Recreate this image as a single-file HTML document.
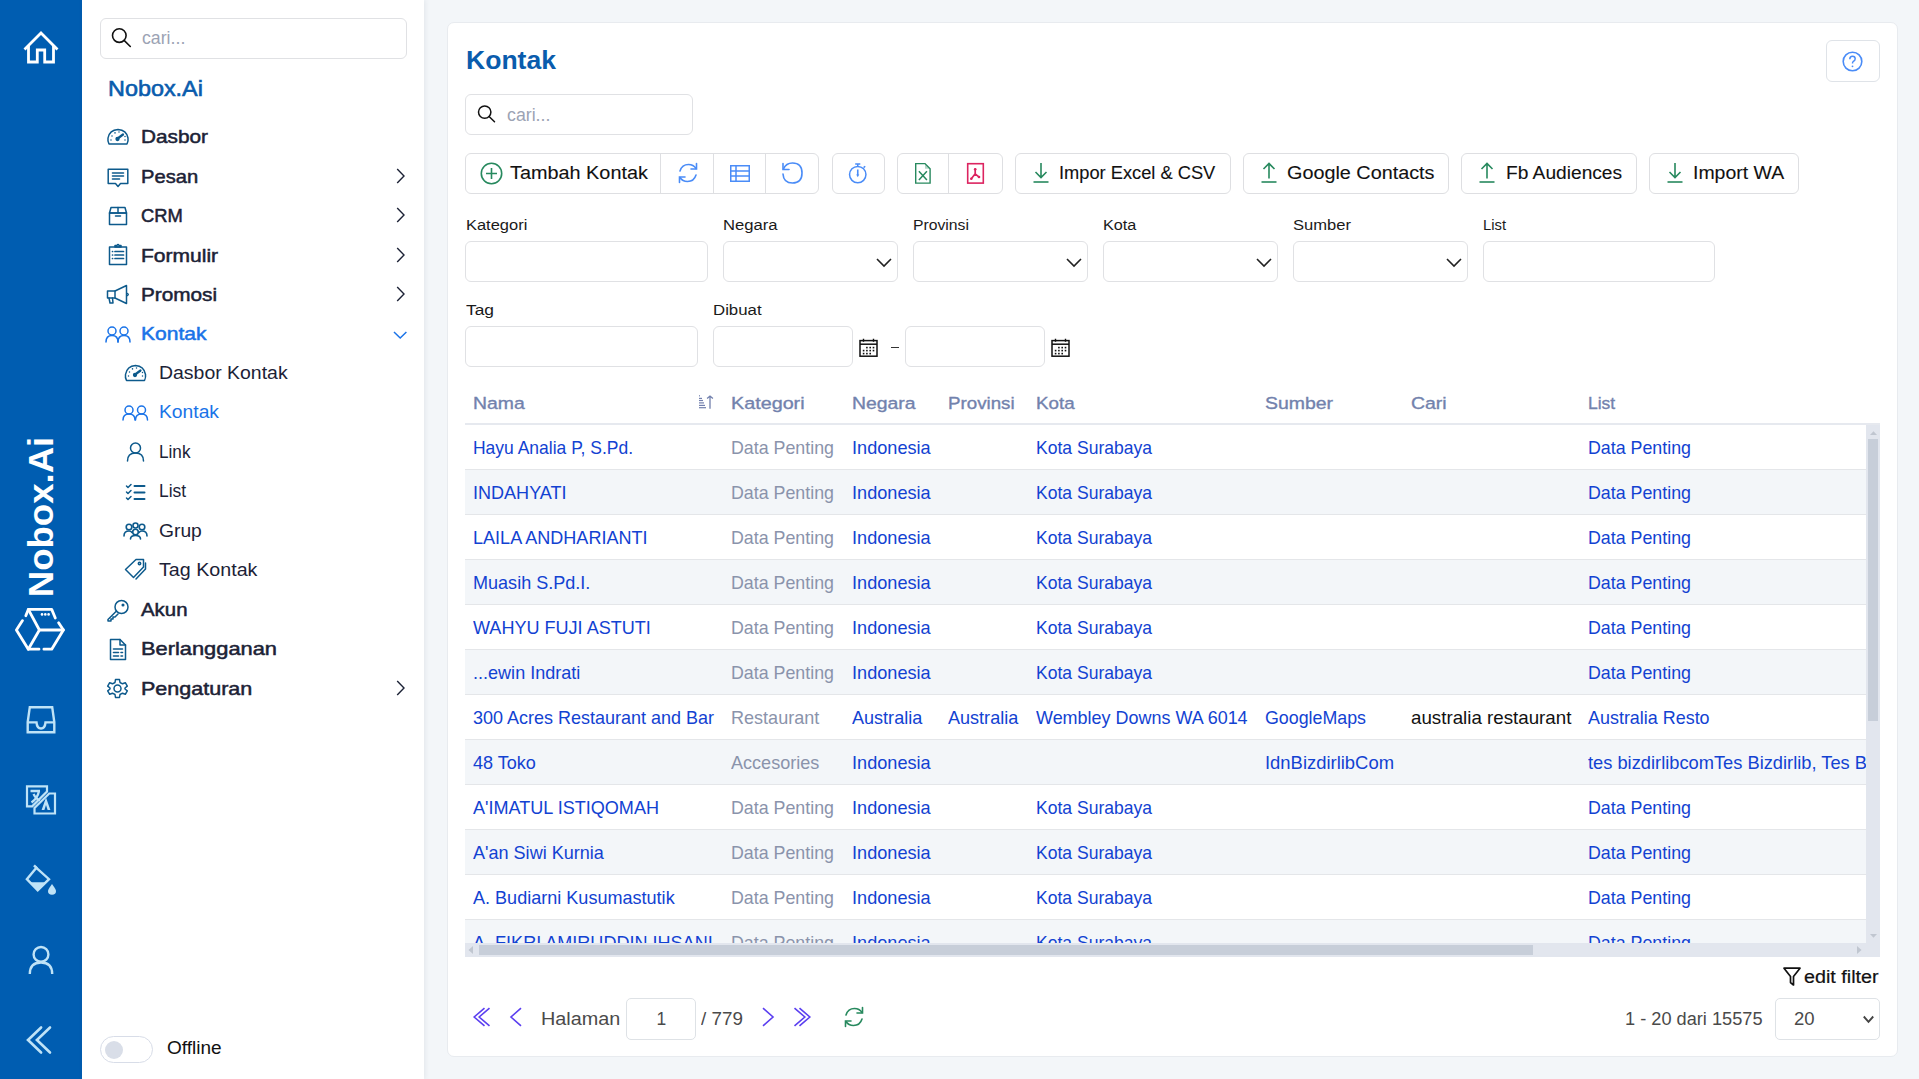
<!DOCTYPE html><html><head><meta charset="utf-8"><style>
*{box-sizing:border-box;margin:0;padding:0}
html,body{width:1919px;height:1079px;overflow:hidden;background:#F3F6F9;font-family:"Liberation Sans",sans-serif;color:#1f2937}
div,span,svg{position:absolute;display:block}
#rail{left:0;top:0;width:82px;height:1079px;background:#005DB1}
#side{left:82px;top:0;width:342px;height:1079px;background:#fff;box-shadow:1px 0 5px rgba(30,40,60,0.08)}
.sbox{border:1px solid #e0e1e4;border-radius:6px;background:#fff}
.ph{color:#9ca3b4;font-size:18px;white-space:nowrap;line-height:20px}
.mi{left:141px;font-size:19.5px;font-weight:bold;color:#1c2236;white-space:nowrap;line-height:20px}
.si{left:159px;font-size:19.5px;color:#1c2236;white-space:nowrap;line-height:20px}
#card{left:447px;top:22px;width:1451px;height:1035px;background:#fff;border:1px solid #e8ebef;border-radius:7px}
.btn{top:153px;height:41px;border:1px solid #dedfe2;border-radius:6px;background:#fff}
.vd{top:153px;width:1px;height:41px;background:#dedfe2}
.bt{top:163px;font-size:19px;color:#111;white-space:nowrap;line-height:20px}
.lbl{font-size:16px;color:#212529;white-space:nowrap;line-height:16px}
.inp{height:41px;border:1px solid #e0e1e4;border-radius:6px;background:#fff}
.th{top:393px;font-size:17.5px;color:#7b86a6;white-space:nowrap;line-height:18px}
.row{left:0;width:1401px;height:45px;border-bottom:1px solid #e4e6e9;overflow:hidden}
.alt{background:#F3F6F9}
.c{top:12px;font-size:17.5px;color:#1d45d0;white-space:nowrap;line-height:20px}
.g{color:#8a93a6}
.k{color:#111}
svg{overflow:visible}
</style></head><body>
<div id="rail"></div>
<svg style="left:0;top:0;width:82px;height:1079px" width="82" height="1079" viewBox="0 0 82 1079">
<path d="M25.5 48.5 L41 33 L56.5 48.5" fill="none" stroke="#ffffff" stroke-width="2.8" stroke-linecap="square"/>
<path d="M28.5 46 V62 H37.3 V50 H44.7 V62 H53.5 V46" fill="none" stroke="#ffffff" stroke-width="2.8"/>
<g fill="none" stroke="#ffffff" stroke-width="2.8" stroke-linecap="round" stroke-linejoin="round">
<path d="M25.8 615.8 L28.3 609.4 L51.7 609.4 L55.3 618"/>
<path d="M58.6 622.8 L63.4 630 L51.7 649.2 L43.9 649.2"/>
<path d="M39 649.2 L28.3 649.2 L16.4 630 L22.5 620.6"/>
<path d="M28.3 609.4 L39.4 630 L28.3 649.2"/>
<path d="M39.4 630 L63.4 630"/>
</g>
<g fill="#ffffff"><circle cx="42" cy="614.4" r="1.3"/><circle cx="45.3" cy="614.4" r="1.3"/><circle cx="48.6" cy="614.4" r="1.3"/></g>
<g fill="none" stroke="#bfe3f7" stroke-width="2.4" stroke-linejoin="miter">
<path d="M29.8 707.2 H52.2 L54.3 722 V732.3 H27.7 V722 Z"/>
<path d="M27.7 722.4 H36.5 Q37 728.5 41 728.5 Q45 728.5 45.5 722.4 H54.3"/>
</g>
<g fill="none" stroke="#bfe3f7" stroke-width="2.2" stroke-linejoin="miter">
<path d="M27 786.3 H47 V791.5 L32.2 806.4 H27 Z"/>
<path d="M34.5 813.5 V808 L49.2 793.5 H55 V813.5 Z"/>
</g>
<g fill="none" stroke="#bfe3f7" stroke-width="2.3" stroke-linecap="butt">
<path d="M30.5 791 H40 M39 791 Q37.5 798.5 31.5 802.5 M33.5 794 Q36 799 40 800.5"/>
</g>
<path d="M41.6 810 L46 797.6 L50.4 810 H47.6 L46 805 L44.4 810 Z" fill="#bfe3f7"/>
<g fill="none" stroke="#bfe3f7" stroke-width="2.4" stroke-linejoin="miter">
<path d="M34 865.3 L37 868.3"/>
<path d="M36.4 867.8 L49 879.2 L37.7 890.3 L26.9 879.2 Z"/>
</g>
<path d="M29.5 882.3 L46.5 882.3 L37.7 891 Z" fill="#bfe3f7"/>
<path d="M52 884 Q48 889.5 48 891 Q48 894.8 52 894.8 Q56 894.8 56 891 Q56 889.5 52 884 Z" fill="#bfe3f7"/>
<g fill="none" stroke="#bfe3f7" stroke-width="2.4">
<circle cx="41" cy="954.4" r="7.4"/>
<path d="M29.8 974 Q29.8 962.5 41 962.5 Q52.2 962.5 52.2 974"/>
</g>
<g fill="none" stroke="#bfe3f7" stroke-width="2.6" stroke-linecap="round" stroke-linejoin="miter">
<path d="M41.1 1027.5 L28 1040 L41.1 1052.5"/>
<path d="M50 1027.5 L36.9 1040 L50 1052.5"/>
</g>
</svg>
<div style="left:-37px;top:498px;width:156px;height:38px;transform:rotate(-90deg) scaleX(1.045);color:#fff;font-weight:bold;font-size:35px;line-height:38px;white-space:nowrap;text-align:center">Nobox.Ai</div>
<div id="side"></div>
<div class="sbox" style="left:100px;top:18px;width:307px;height:41px"></div>
<svg style="left:100px;top:18px;width:40px;height:40px" viewBox="0 0 40 40" width="40" height="40" ><g fill="none" stroke="#111" stroke-width="1.6"><circle cx="19.3" cy="17.6" r="6.8"/><path d="M24.1 22.4 L30.3 28.5" stroke-linecap="round"/></g></svg>
<div style="left:141.50px;top:28px;font-size:17.5px;line-height:20px;color:#9ca3b4;white-space:nowrap;transform:scaleX(1.0120);transform-origin:0 0;">cari...</div>
<div style="left:108.00px;top:76px;font-size:21.7px;line-height:25px;color:#0a5cad;white-space:nowrap;transform:scaleX(1.0778);transform-origin:0 0;-webkit-text-stroke:0.6px #0a5cad;">Nobox.Ai</div>
<div style="left:141.00px;top:126px;font-size:18.5px;line-height:21px;color:#1c2236;white-space:nowrap;transform:scaleX(1.1234);transform-origin:0 0;-webkit-text-stroke:0.5px #1c2236;">Dasbor</div>
<div style="left:141.00px;top:166px;font-size:18.5px;line-height:21px;color:#1c2236;white-space:nowrap;transform:scaleX(1.0885);transform-origin:0 0;-webkit-text-stroke:0.5px #1c2236;">Pesan</div>
<svg style="left:396px;top:168px;width:10px;height:16px" viewBox="0 0 10 16" width="10" height="16" ><path d="M1.2 1 L8 8 L1.2 15" fill="none" stroke="#1c2236" stroke-width="1.4"/></svg>
<div style="left:141.00px;top:205px;font-size:18.5px;line-height:21px;color:#1c2236;white-space:nowrap;transform:scaleX(0.9921);transform-origin:0 0;-webkit-text-stroke:0.5px #1c2236;">CRM</div>
<svg style="left:396px;top:207px;width:10px;height:16px" viewBox="0 0 10 16" width="10" height="16" ><path d="M1.2 1 L8 8 L1.2 15" fill="none" stroke="#1c2236" stroke-width="1.4"/></svg>
<div style="left:141.00px;top:245px;font-size:18.5px;line-height:21px;color:#1c2236;white-space:nowrap;transform:scaleX(1.1366);transform-origin:0 0;-webkit-text-stroke:0.5px #1c2236;">Formulir</div>
<svg style="left:396px;top:247px;width:10px;height:16px" viewBox="0 0 10 16" width="10" height="16" ><path d="M1.2 1 L8 8 L1.2 15" fill="none" stroke="#1c2236" stroke-width="1.4"/></svg>
<div style="left:141.00px;top:284px;font-size:18.5px;line-height:21px;color:#1c2236;white-space:nowrap;transform:scaleX(1.1216);transform-origin:0 0;-webkit-text-stroke:0.5px #1c2236;">Promosi</div>
<svg style="left:396px;top:286px;width:10px;height:16px" viewBox="0 0 10 16" width="10" height="16" ><path d="M1.2 1 L8 8 L1.2 15" fill="none" stroke="#1c2236" stroke-width="1.4"/></svg>
<div style="left:141.00px;top:323px;font-size:18.5px;line-height:21px;color:#1a73e8;white-space:nowrap;transform:scaleX(1.1372);transform-origin:0 0;-webkit-text-stroke:0.5px #1a73e8;">Kontak</div>
<svg style="left:393px;top:331px;width:15px;height:10px" viewBox="0 0 15 10" width="15" height="10" ><path d="M1 1 L7.2 7 L13.4 1" fill="none" stroke="#1a73e8" stroke-width="1.5"/></svg>
<div style="left:159.00px;top:363px;font-size:17.5px;line-height:20px;color:#1c2236;white-space:nowrap;transform:scaleX(1.1109);transform-origin:0 0;">Dasbor Kontak</div>
<div style="left:159.00px;top:402px;font-size:17.5px;line-height:20px;color:#1a73e8;white-space:nowrap;transform:scaleX(1.1012);transform-origin:0 0;">Kontak</div>
<div style="left:159.00px;top:442px;font-size:17.5px;line-height:20px;color:#1c2236;white-space:nowrap;transform:scaleX(0.9812);transform-origin:0 0;">Link</div>
<div style="left:159.00px;top:481px;font-size:17.5px;line-height:20px;color:#1c2236;white-space:nowrap;transform:scaleX(0.9951);transform-origin:0 0;">List</div>
<div style="left:159.00px;top:521px;font-size:17.5px;line-height:20px;color:#1c2236;white-space:nowrap;transform:scaleX(1.1001);transform-origin:0 0;">Grup</div>
<div style="left:159.00px;top:560px;font-size:17.5px;line-height:20px;color:#1c2236;white-space:nowrap;transform:scaleX(1.1238);transform-origin:0 0;">Tag Kontak</div>
<div style="left:141.00px;top:599px;font-size:18.5px;line-height:21px;color:#1c2236;white-space:nowrap;transform:scaleX(1.1027);transform-origin:0 0;-webkit-text-stroke:0.5px #1c2236;">Akun</div>
<div style="left:141.00px;top:638px;font-size:18.5px;line-height:21px;color:#1c2236;white-space:nowrap;transform:scaleX(1.1804);transform-origin:0 0;-webkit-text-stroke:0.5px #1c2236;">Berlangganan</div>
<div style="left:141.00px;top:678px;font-size:18.5px;line-height:21px;color:#1c2236;white-space:nowrap;transform:scaleX(1.1634);transform-origin:0 0;-webkit-text-stroke:0.5px #1c2236;">Pengaturan</div>
<svg style="left:396px;top:680px;width:10px;height:16px" viewBox="0 0 10 16" width="10" height="16" ><path d="M1.2 1 L8 8 L1.2 15" fill="none" stroke="#1c2236" stroke-width="1.4"/></svg>
<svg style="left:107px;top:128px;width:22px;height:18px" viewBox="0 0 22 18" width="22" height="18" ><g fill="none" stroke="#0d5a8c" stroke-width="1.5" stroke-linejoin="round" stroke-linecap="round"><path d="M2 16 Q0.5 13 1 10 Q2.5 2 11 1.5 Q19.5 2 21 10 Q21.5 13 20 16 Z"/><path d="M10 11 L16 6.5" stroke-width="2.2"/><circle cx="10.5" cy="11" r="1.4" fill="#0d5a8c"/><path d="M4 12 v0.1 M5 8 v0.1 M8 4.8 v0.1 M12 4 v0.1 M18 12 v0.1 M18 8.5 v0.1" stroke-width="1.5"/></g></svg>
<svg style="left:107px;top:168px;width:22px;height:21px" viewBox="0 0 22 21" width="22" height="21" ><g fill="none" stroke="#0d5a8c" stroke-width="1.5" stroke-linejoin="round" stroke-linecap="round"><path d="M1.2 1.2 H20.8 V15.5 H13.5 L11 18.5 L8.5 15.5 H1.2 Z"/><path d="M5.5 5 H16.5 M5.5 8 H16.5 M5.5 11 H12.5" stroke-width="1.6"/></g></svg>
<svg style="left:108px;top:206px;width:20px;height:20px" viewBox="0 0 20 20" width="20" height="20" ><g fill="none" stroke="#0d5a8c" stroke-width="1.5" stroke-linejoin="round" stroke-linecap="round"><path d="M1.5 7 H18.5 V18.5 H1.5 Z"/><path d="M3 1.5 H17 L18.5 7 H1.5 Z"/><path d="M10 1.5 V7 M7.5 10 H12.5"/></g></svg>
<svg style="left:108px;top:243px;width:20px;height:23px" viewBox="0 0 20 23" width="20" height="23" ><g fill="none" stroke="#0d5a8c" stroke-width="1.5" stroke-linejoin="round" stroke-linecap="round"><path d="M1.5 4 H18.5 V21.5 H1.5 Z"/><path d="M7 4 V2.5 H9 Q10 0.5 11 2.5 H13 V4 Z"/><path d="M4.5 8.5 h0.1 M4.5 12 h0.1 M4.5 15.5 h0.1 M7 8.5 H15.5 M7 12 H15.5 M7 15.5 H15.5" stroke-width="1.7"/></g></svg>
<svg style="left:106px;top:284px;width:24px;height:21px" viewBox="0 0 24 21" width="24" height="21" ><g fill="none" stroke="#0d5a8c" stroke-width="1.5" stroke-linejoin="round" stroke-linecap="round"><path d="M1.5 7 H9 L20.5 1.5 V19.5 L9 14 H1.5 Z"/><path d="M9 7 V14"/><path d="M3 14 L4 19 H7 L6.5 14"/><path d="M21.5 9.5 Q23 10.5 21.5 11.5"/></g></svg>
<svg style="left:105px;top:326px;width:26px;height:17px" viewBox="0 0 26 17" width="26" height="17" ><g fill="none" stroke="#1a73e8" stroke-width="1.5" stroke-linejoin="round" stroke-linecap="round"><circle cx="7" cy="5" r="4"/><path d="M1 16 Q1 9.5 7 9.5 Q13 9.5 13 16"/><circle cx="19" cy="5" r="4"/><path d="M13 16 Q13 9.5 19 9.5 Q25 9.5 25 16"/></g></svg>
<svg style="left:124px;top:364px;width:23px;height:18px" viewBox="0 0 23 18" width="23" height="18" ><g fill="none" stroke="#0d5a8c" stroke-width="1.5" stroke-linejoin="round" stroke-linecap="round"><path d="M2.5 16.5 Q1 13.5 1.5 10.5 Q3 2 11.5 1.5 Q20 2 21.5 10.5 Q22 13.5 20.5 16.5 Z"/><path d="M10.5 11 L16.5 6.5" stroke-width="2.2"/><circle cx="11" cy="11" r="1.4" fill="#0d5a8c"/><path d="M4.5 12 v0.1 M5.5 8 v0.1 M8.5 4.8 v0.1 M12.5 4 v0.1 M18.5 12 v0.1 M18.5 8.5 v0.1" stroke-width="1.5"/></g></svg>
<svg style="left:122px;top:405px;width:27px;height:16px" viewBox="0 0 27 16" width="27" height="16" ><g fill="none" stroke="#1a73e8" stroke-width="1.5" stroke-linejoin="round" stroke-linecap="round"><circle cx="7" cy="5" r="4"/><path d="M1 15 Q1 9 7 9 Q13 9 13 15"/><circle cx="19.5" cy="5" r="4"/><path d="M13.5 15 Q13.5 9 19.5 9 Q25.5 9 25.5 15"/></g></svg>
<svg style="left:126px;top:442px;width:19px;height:20px" viewBox="0 0 19 20" width="19" height="20" ><g fill="none" stroke="#0d5a8c" stroke-width="1.5" stroke-linejoin="round" stroke-linecap="round"><circle cx="9.5" cy="6" r="5"/><path d="M1.5 19 Q1.5 11 9.5 11 Q17.5 11 17.5 19"/></g></svg>
<svg style="left:125px;top:483px;width:21px;height:19px" viewBox="0 0 21 19" width="21" height="19" ><g fill="none" stroke="#0d5a8c" stroke-width="1.5" stroke-linejoin="round" stroke-linecap="round"><path d="M1.5 3 L3 4.5 L6 1.5 M1.5 9 L3 10.5 L6 7.5 M1.5 15 L3 16.5 L6 13.5"/><path d="M9.5 3 H19.5 M9.5 9.5 H19.5 M9.5 16 H19.5" stroke-width="2"/></g></svg>
<svg style="left:123px;top:522px;width:25px;height:18px" viewBox="0 0 25 18" width="25" height="18" ><g fill="none" stroke="#0d5a8c" stroke-width="1.6" stroke-linejoin="round" stroke-linecap="round"><circle cx="6" cy="5" r="2.8"/><circle cx="12.5" cy="3.5" r="2.5"/><circle cx="19" cy="5" r="2.8"/><circle cx="12.5" cy="10" r="2.8"/><path d="M1 14 Q1 9 6 9 Q8 9 9 10.5 M24 14 Q24 9 19 9 Q17 9 16 10.5 M7.5 17 Q7.5 13.5 12.5 13.5 Q17.5 13.5 17.5 17"/></g></svg>
<svg style="left:124px;top:558px;width:23px;height:23px" viewBox="0 0 23 23" width="23" height="23" ><g fill="none" stroke="#0d5a8c" stroke-width="1.5" stroke-linejoin="round" stroke-linecap="round"><path d="M1.5 11.5 L12 1.5 H19.5 V9 L9.5 19.5 Z"/><circle cx="15.5" cy="5.5" r="1.2"/><path d="M21.5 5 V11 L12 21"/></g></svg>
<svg style="left:106px;top:599px;width:24px;height:23px" viewBox="0 0 24 23" width="24" height="23" ><g fill="none" stroke="#0d5a8c" stroke-width="1.5" stroke-linejoin="round" stroke-linecap="round"><circle cx="15.5" cy="8" r="6.5"/><circle cx="17" cy="6" r="0.8" fill="#0d5a8c"/><path d="M10.5 12 L2 20.5 V22 H5 V20 H7 V18 H9 L12 15"/></g></svg>
<svg style="left:109px;top:638px;width:18px;height:23px" viewBox="0 0 18 23" width="18" height="23" ><g fill="none" stroke="#0d5a8c" stroke-width="1.5" stroke-linejoin="round" stroke-linecap="round"><path d="M1.5 1.5 H11 L16.5 7 V21.5 H1.5 Z"/><path d="M11 1.5 V7 H16.5"/><path d="M4.5 11 H13.5 M4.5 14.5 H9.5 M12 14.5 h1.5 M4.5 18 H9.5 M12 18 h1.5" stroke-width="1.6"/></g></svg>
<svg style="left:107px;top:678px;width:21px;height:21px" viewBox="0 0 21 21" width="21" height="21" ><g fill="none" stroke="#0d5a8c" stroke-width="1.5" stroke-linejoin="round" stroke-linecap="round"><path d="M8.5 1.5 H12.5 L13 4.5 L15.5 5.8 L18.3 4.7 L20.3 8.2 L18 10 V11 L20.3 12.8 L18.3 16.3 L15.5 15.2 L13 16.5 L12.5 19.5 H8.5 L8 16.5 L5.5 15.2 L2.7 16.3 L0.7 12.8 L3 11 V10 L0.7 8.2 L2.7 4.7 L5.5 5.8 L8 4.5 Z"/><circle cx="10.5" cy="10.5" r="3.5"/></g></svg>
<div style="left:100px;top:1036px;width:53px;height:27px;border:1.6px solid #d8dde8;border-radius:14px;background:#fff"></div>
<div style="left:105px;top:1040.5px;width:18px;height:18px;border-radius:9px;background:#d9dee8"></div>
<div style="left:166.50px;top:1038px;font-size:17.5px;line-height:20px;color:#111;white-space:nowrap;transform:scaleX(1.0863);transform-origin:0 0;">Offline</div>
<div id="card"></div>
<div style="left:466.30px;top:45px;font-size:26px;line-height:30px;color:#0a5cad;white-space:nowrap;font-weight:bold;transform:scaleX(1.0213);transform-origin:0 0;">Kontak</div>
<div style="left:1826px;top:40px;width:54px;height:42px;border:1px solid #dfe3e8;border-radius:6px;background:#fff"></div>
<svg style="left:1842px;top:51px;width:21px;height:21px" viewBox="0 0 21 21" width="21" height="21" ><circle cx="10.5" cy="10.5" r="9.3" fill="none" stroke="#4a8cf7" stroke-width="1.6"/><path d="M7.8 8.2 Q7.8 5.2 10.5 5.2 Q13.2 5.2 13.2 7.8 Q13.2 9.6 11.2 10.5 Q10.5 11 10.5 12.6" fill="none" stroke="#4a8cf7" stroke-width="1.5"/><circle cx="10.5" cy="15.3" r="0.9" fill="#4a8cf7"/></svg>
<div class="sbox" style="left:465px;top:94px;width:228px;height:41px"></div>
<svg style="left:465px;top:94px;width:40px;height:40px" viewBox="0 0 40 40" width="40" height="40" ><g fill="none" stroke="#111" stroke-width="1.5"><circle cx="19.7" cy="18.1" r="6.2"/><path d="M24.1 22.5 L29.5 27.8" stroke-linecap="round"/></g></svg>
<div style="left:507.20px;top:105px;font-size:17.5px;line-height:20px;color:#9ca3b4;white-space:nowrap;transform:scaleX(1.0144);transform-origin:0 0;">cari...</div>
<div class="btn" style="left:465px;width:354px"></div>
<div class="vd" style="left:660px"></div>
<div class="vd" style="left:713px"></div>
<div class="vd" style="left:765px"></div>
<div class="btn" style="left:832px;width:53px"></div>
<div class="btn" style="left:897px;width:106px"></div>
<div class="vd" style="left:948px"></div>
<svg style="left:480px;top:162px;width:23px;height:23px" viewBox="0 0 23 23" width="23" height="23" ><circle cx="11.5" cy="11.5" r="10.2" fill="none" stroke="#27895e" stroke-width="1.6"/><path d="M11.5 6 V17 M6 11.5 H17" stroke="#27895e" stroke-width="1.6"/></svg>
<svg style="left:677px;top:162px;width:22px;height:22px" viewBox="0 0 22 22" width="22" height="22" ><g fill="none" stroke="#4a8cf7" stroke-width="1.6" stroke-linecap="round"><path d="M3 9 Q5 2.5 11.5 2.5 Q16.5 2.5 19 6.5"/><path d="M19.5 1.5 V7 H14"/><path d="M19 13 Q17 19.5 10.5 19.5 Q5.5 19.5 3 15.5"/><path d="M2.5 20.5 V15 H8"/></g></svg>
<svg style="left:730px;top:165px;width:20px;height:17px" viewBox="0 0 20 17" width="20" height="17" ><g fill="none" stroke="#4a8cf7" stroke-width="1.5"><rect x="0.75" y="0.75" width="18.5" height="15.5"/><path d="M0.75 5.9 H19.25 M0.75 11.1 H19.25 M6 0.75 V16.25"/></g></svg>
<svg style="left:780px;top:161px;width:24px;height:24px" viewBox="0 0 24 24" width="24" height="24" ><g fill="none" stroke="#4a8cf7" stroke-width="1.6" stroke-linecap="round"><path d="M3.5 8 Q6 2 12.5 2 Q22 2 22 12 Q22 22 12.5 22 Q3.5 22 3 13"/><path d="M3 2.5 V8.5 H9"/></g></svg>
<svg style="left:840px;top:155px;width:40px;height:40px" viewBox="0 0 40 40" width="40" height="40" ><g fill="none" stroke="#4a8cf7" stroke-width="1.5"><circle cx="17.75" cy="19.6" r="8.2"/><path d="M15.2 9.1 H20.3 M17.75 9.1 V11.4 M23.6 12.6 L25.2 11.2"/></g><path d="M17.75 14.5 V20" stroke="#4a8cf7" stroke-width="1.6"/><path d="M16.2 19.5 L17.75 22.3 L19.3 19.5 Z" fill="#4a8cf7"/></svg>
<svg style="left:900px;top:150px;width:40px;height:40px" viewBox="0 0 40 40" width="40" height="40" ><g fill="none" stroke="#27895e" stroke-width="1.4" stroke-linejoin="miter"><path d="M15.7 13.6 H25 L30.1 18.8 V33.1 H15.7 Z"/></g><path d="M25 13.8 L30 18.8 H25 Z" fill="#27895e" opacity="0.35"/><path d="M18.9 21.3 L26.9 30 M26.9 21.3 L18.9 30" stroke="#27895e" stroke-width="1.5"/></svg>
<svg style="left:960px;top:150px;width:40px;height:40px" viewBox="0 0 40 40" width="40" height="40" ><rect x="7.7" y="13.7" width="15.6" height="19.4" fill="none" stroke="#dc2460" stroke-width="1.6"/><g fill="none" stroke="#dc2460" stroke-width="1.7" stroke-linecap="round"><path d="M15.2 19.2 V23.8 L11.5 28.5 M15.2 23.8 L18.8 26.8"/></g><circle cx="15.2" cy="19.2" r="1.3" fill="#dc2460"/><circle cx="11.3" cy="28.7" r="1.3" fill="#dc2460"/><circle cx="19" cy="27" r="1.3" fill="#dc2460"/></svg>
<div style="left:510.10px;top:163px;font-size:17.5px;line-height:20px;color:#111;white-space:nowrap;transform:scaleX(1.1340);transform-origin:0 0;-webkit-text-stroke:0.1px #111;">Tambah Kontak</div>
<div class="btn" style="left:1015px;width:216px"></div>
<svg style="left:1032.5px;top:162px;width:16px;height:21px" viewBox="0 0 16 21" width="16" height="21" ><g fill="none" stroke="#27895e" stroke-width="1.6"><path d="M8 1 V15.5 M2.5 10 L8 15.5 L13.5 10"/><path d="M0.5 20 H15.5"/></g></svg>
<div style="left:1059.40px;top:163px;font-size:17.5px;line-height:20px;color:#111;white-space:nowrap;transform:scaleX(1.0436);transform-origin:0 0;-webkit-text-stroke:0.1px #111;">Impor Excel &amp; CSV</div>
<div class="btn" style="left:1243px;width:206px"></div>
<svg style="left:1260.5px;top:162px;width:16px;height:21px" viewBox="0 0 16 21" width="16" height="21" ><g fill="none" stroke="#27895e" stroke-width="1.6"><path d="M8 1.5 V16.5 M2.5 7 L8 1.5 L13.5 7"/><path d="M0.5 20 H15.5"/></g></svg>
<div style="left:1287.00px;top:163px;font-size:17.5px;line-height:20px;color:#111;white-space:nowrap;transform:scaleX(1.1315);transform-origin:0 0;-webkit-text-stroke:0.1px #111;">Google Contacts</div>
<div class="btn" style="left:1461px;width:176px"></div>
<svg style="left:1478.5px;top:162px;width:16px;height:21px" viewBox="0 0 16 21" width="16" height="21" ><g fill="none" stroke="#27895e" stroke-width="1.6"><path d="M8 1.5 V16.5 M2.5 7 L8 1.5 L13.5 7"/><path d="M0.5 20 H15.5"/></g></svg>
<div style="left:1505.90px;top:163px;font-size:17.5px;line-height:20px;color:#111;white-space:nowrap;transform:scaleX(1.0948);transform-origin:0 0;-webkit-text-stroke:0.1px #111;">Fb Audiences</div>
<div class="btn" style="left:1649px;width:150px"></div>
<svg style="left:1666.5px;top:162px;width:16px;height:21px" viewBox="0 0 16 21" width="16" height="21" ><g fill="none" stroke="#27895e" stroke-width="1.6"><path d="M8 1 V15.5 M2.5 10 L8 15.5 L13.5 10"/><path d="M0.5 20 H15.5"/></g></svg>
<div style="left:1693.00px;top:163px;font-size:17.5px;line-height:20px;color:#111;white-space:nowrap;transform:scaleX(1.1110);transform-origin:0 0;-webkit-text-stroke:0.1px #111;">Import WA</div>
<div style="left:466.00px;top:216px;font-size:15.3px;line-height:17px;color:#1a1a1a;white-space:nowrap;transform:scaleX(1.0756);transform-origin:0 0;">Kategori</div>
<div style="left:723.30px;top:216px;font-size:15.3px;line-height:17px;color:#1a1a1a;white-space:nowrap;transform:scaleX(1.0880);transform-origin:0 0;">Negara</div>
<div style="left:913.00px;top:216px;font-size:15.3px;line-height:17px;color:#1a1a1a;white-space:nowrap;transform:scaleX(1.0291);transform-origin:0 0;">Provinsi</div>
<div style="left:1103.20px;top:216px;font-size:15.3px;line-height:17px;color:#1a1a1a;white-space:nowrap;transform:scaleX(1.0612);transform-origin:0 0;">Kota</div>
<div style="left:1293.30px;top:216px;font-size:15.3px;line-height:17px;color:#1a1a1a;white-space:nowrap;transform:scaleX(1.0826);transform-origin:0 0;">Sumber</div>
<div style="left:1483.10px;top:216px;font-size:15.3px;line-height:17px;color:#1a1a1a;white-space:nowrap;transform:scaleX(0.9660);transform-origin:0 0;">List</div>
<div class="inp" style="left:465px;top:241px;width:243px"></div>
<div class="inp" style="left:723px;top:241px;width:175px"></div>
<svg style="left:876px;top:258px;width:16px;height:9px" viewBox="0 0 16 9" width="16" height="9" ><path d="M1 1 L8 8 L15 1" fill="none" stroke="#222" stroke-width="1.6"/></svg>
<div class="inp" style="left:913px;top:241px;width:175px"></div>
<svg style="left:1066px;top:258px;width:16px;height:9px" viewBox="0 0 16 9" width="16" height="9" ><path d="M1 1 L8 8 L15 1" fill="none" stroke="#222" stroke-width="1.6"/></svg>
<div class="inp" style="left:1103px;top:241px;width:175px"></div>
<svg style="left:1256px;top:258px;width:16px;height:9px" viewBox="0 0 16 9" width="16" height="9" ><path d="M1 1 L8 8 L15 1" fill="none" stroke="#222" stroke-width="1.6"/></svg>
<div class="inp" style="left:1293px;top:241px;width:175px"></div>
<svg style="left:1446px;top:258px;width:16px;height:9px" viewBox="0 0 16 9" width="16" height="9" ><path d="M1 1 L8 8 L15 1" fill="none" stroke="#222" stroke-width="1.6"/></svg>
<div class="inp" style="left:1483px;top:241px;width:232px"></div>
<div style="left:465.50px;top:301px;font-size:15.3px;line-height:17px;color:#1a1a1a;white-space:nowrap;transform:scaleX(1.1350);transform-origin:0 0;">Tag</div>
<div style="left:713.40px;top:301px;font-size:15.3px;line-height:17px;color:#1a1a1a;white-space:nowrap;transform:scaleX(1.0989);transform-origin:0 0;">Dibuat</div>
<div class="inp" style="left:465px;top:326px;width:233px"></div>
<div class="inp" style="left:713px;top:326px;width:140px"></div>
<div class="inp" style="left:905px;top:326px;width:140px"></div>
<svg style="left:859px;top:338px;width:19px;height:19px" viewBox="0 0 19 19" width="19" height="19" ><g fill="none" stroke="#111" stroke-width="1.5"><rect x="1" y="2.6" width="17" height="15.6"/><path d="M1 6.2 H18"/><path d="M4.5 0.8 V3.8 M14.5 0.8 V3.8" stroke-width="1.4"/></g><g fill="#111"><rect x="7.1000000000000005" y="8.799999999999999" width="1.6" height="1.6"/><rect x="10.399999999999999" y="8.799999999999999" width="1.6" height="1.6"/><rect x="13.7" y="8.799999999999999" width="1.6" height="1.6"/><rect x="3.8" y="11.799999999999999" width="1.6" height="1.6"/><rect x="7.1000000000000005" y="11.799999999999999" width="1.6" height="1.6"/><rect x="10.399999999999999" y="11.799999999999999" width="1.6" height="1.6"/><rect x="13.7" y="11.799999999999999" width="1.6" height="1.6"/><rect x="3.8" y="14.799999999999999" width="1.6" height="1.6"/><rect x="7.1000000000000005" y="14.799999999999999" width="1.6" height="1.6"/><rect x="10.399999999999999" y="14.799999999999999" width="1.6" height="1.6"/></g></svg>
<svg style="left:1051px;top:338px;width:19px;height:19px" viewBox="0 0 19 19" width="19" height="19" ><g fill="none" stroke="#111" stroke-width="1.5"><rect x="1" y="2.6" width="17" height="15.6"/><path d="M1 6.2 H18"/><path d="M4.5 0.8 V3.8 M14.5 0.8 V3.8" stroke-width="1.4"/></g><g fill="#111"><rect x="7.1000000000000005" y="8.799999999999999" width="1.6" height="1.6"/><rect x="10.399999999999999" y="8.799999999999999" width="1.6" height="1.6"/><rect x="13.7" y="8.799999999999999" width="1.6" height="1.6"/><rect x="3.8" y="11.799999999999999" width="1.6" height="1.6"/><rect x="7.1000000000000005" y="11.799999999999999" width="1.6" height="1.6"/><rect x="10.399999999999999" y="11.799999999999999" width="1.6" height="1.6"/><rect x="13.7" y="11.799999999999999" width="1.6" height="1.6"/><rect x="3.8" y="14.799999999999999" width="1.6" height="1.6"/><rect x="7.1000000000000005" y="14.799999999999999" width="1.6" height="1.6"/><rect x="10.399999999999999" y="14.799999999999999" width="1.6" height="1.6"/></g></svg>
<div style="left:890.5px;top:347px;width:8px;height:1.2px;background:#333"></div>
<div style="left:473.00px;top:393px;font-size:17.2px;line-height:20px;color:#7282ad;white-space:nowrap;transform:scaleX(1.1279);transform-origin:0 0;-webkit-text-stroke:0.35px #7282ad;">Nama</div>
<div style="left:731.00px;top:393px;font-size:17.2px;line-height:20px;color:#7282ad;white-space:nowrap;transform:scaleX(1.1496);transform-origin:0 0;-webkit-text-stroke:0.35px #7282ad;">Kategori</div>
<div style="left:852.00px;top:393px;font-size:17.2px;line-height:20px;color:#7282ad;white-space:nowrap;transform:scaleX(1.1283);transform-origin:0 0;-webkit-text-stroke:0.35px #7282ad;">Negara</div>
<div style="left:948.00px;top:393px;font-size:17.2px;line-height:20px;color:#7282ad;white-space:nowrap;transform:scaleX(1.0895);transform-origin:0 0;-webkit-text-stroke:0.35px #7282ad;">Provinsi</div>
<div style="left:1036.00px;top:393px;font-size:17.2px;line-height:20px;color:#7282ad;white-space:nowrap;transform:scaleX(1.0923);transform-origin:0 0;-webkit-text-stroke:0.35px #7282ad;">Kota</div>
<div style="left:1265.00px;top:393px;font-size:17.2px;line-height:20px;color:#7282ad;white-space:nowrap;transform:scaleX(1.1315);transform-origin:0 0;-webkit-text-stroke:0.35px #7282ad;">Sumber</div>
<div style="left:1411.00px;top:393px;font-size:17.2px;line-height:20px;color:#7282ad;white-space:nowrap;transform:scaleX(1.1304);transform-origin:0 0;-webkit-text-stroke:0.35px #7282ad;">Cari</div>
<div style="left:1588.00px;top:393px;font-size:17.2px;line-height:20px;color:#7282ad;white-space:nowrap;transform:scaleX(1.0181);transform-origin:0 0;-webkit-text-stroke:0.35px #7282ad;">List</div>
<svg style="left:690px;top:388px;width:30px;height:28px" viewBox="0 0 30 28" width="30" height="28" ><g fill="#7280ad"><rect x="9" y="7.2" width="1" height="1.2"/><rect x="9" y="9.8" width="3" height="1.2"/><rect x="9" y="11.9" width="4" height="1.2"/><rect x="9" y="14.3" width="5" height="1.2"/><rect x="9" y="16.799999999999997" width="6" height="1.2"/><rect x="9" y="19.099999999999998" width="7" height="1.2"/></g><path d="M20 20.8 V8.2 M17.1 10.6 L20 8 L22.9 10.6" fill="none" stroke="#7280ad" stroke-width="1.3"/></svg>
<div style="left:465px;top:423px;width:1415px;height:2px;background:#e6e9ef"></div>
<div style="left:465px;top:425px;width:1401px;height:518px;overflow:hidden">
<div class="row" style="top:0px">
<div style="left:8.00px;top:12px;font-size:19px;line-height:21px;color:#1242d2;white-space:nowrap;transform:scaleX(0.9199);transform-origin:0 0;">Hayu Analia P, S.Pd.</div>
<div style="left:266.00px;top:12px;font-size:19px;line-height:21px;color:#8a93ab;white-space:nowrap;transform:scaleX(0.9376);transform-origin:0 0;">Data Penting</div>
<div style="left:387.00px;top:12px;font-size:19px;line-height:21px;color:#1242d2;white-space:nowrap;transform:scaleX(0.9551);transform-origin:0 0;">Indonesia</div>
<div style="left:571.00px;top:12px;font-size:19px;line-height:21px;color:#1242d2;white-space:nowrap;transform:scaleX(0.9228);transform-origin:0 0;">Kota Surabaya</div>
<div style="left:1123.00px;top:12px;font-size:19px;line-height:21px;color:#1242d2;white-space:nowrap;transform:scaleX(0.9376);transform-origin:0 0;">Data Penting</div>
</div>
<div class="row alt" style="top:45px">
<div style="left:8.00px;top:12px;font-size:19px;line-height:21px;color:#1242d2;white-space:nowrap;transform:scaleX(0.9500);transform-origin:0 0;">INDAHYATI</div>
<div style="left:266.00px;top:12px;font-size:19px;line-height:21px;color:#8a93ab;white-space:nowrap;transform:scaleX(0.9376);transform-origin:0 0;">Data Penting</div>
<div style="left:387.00px;top:12px;font-size:19px;line-height:21px;color:#1242d2;white-space:nowrap;transform:scaleX(0.9551);transform-origin:0 0;">Indonesia</div>
<div style="left:571.00px;top:12px;font-size:19px;line-height:21px;color:#1242d2;white-space:nowrap;transform:scaleX(0.9228);transform-origin:0 0;">Kota Surabaya</div>
<div style="left:1123.00px;top:12px;font-size:19px;line-height:21px;color:#1242d2;white-space:nowrap;transform:scaleX(0.9376);transform-origin:0 0;">Data Penting</div>
</div>
<div class="row" style="top:90px">
<div style="left:8.00px;top:12px;font-size:19px;line-height:21px;color:#1242d2;white-space:nowrap;transform:scaleX(0.9500);transform-origin:0 0;">LAILA ANDHARIANTI</div>
<div style="left:266.00px;top:12px;font-size:19px;line-height:21px;color:#8a93ab;white-space:nowrap;transform:scaleX(0.9376);transform-origin:0 0;">Data Penting</div>
<div style="left:387.00px;top:12px;font-size:19px;line-height:21px;color:#1242d2;white-space:nowrap;transform:scaleX(0.9551);transform-origin:0 0;">Indonesia</div>
<div style="left:571.00px;top:12px;font-size:19px;line-height:21px;color:#1242d2;white-space:nowrap;transform:scaleX(0.9228);transform-origin:0 0;">Kota Surabaya</div>
<div style="left:1123.00px;top:12px;font-size:19px;line-height:21px;color:#1242d2;white-space:nowrap;transform:scaleX(0.9376);transform-origin:0 0;">Data Penting</div>
</div>
<div class="row alt" style="top:135px">
<div style="left:8.00px;top:12px;font-size:19px;line-height:21px;color:#1242d2;white-space:nowrap;transform:scaleX(0.9500);transform-origin:0 0;">Muasih S.Pd.I.</div>
<div style="left:266.00px;top:12px;font-size:19px;line-height:21px;color:#8a93ab;white-space:nowrap;transform:scaleX(0.9376);transform-origin:0 0;">Data Penting</div>
<div style="left:387.00px;top:12px;font-size:19px;line-height:21px;color:#1242d2;white-space:nowrap;transform:scaleX(0.9551);transform-origin:0 0;">Indonesia</div>
<div style="left:571.00px;top:12px;font-size:19px;line-height:21px;color:#1242d2;white-space:nowrap;transform:scaleX(0.9228);transform-origin:0 0;">Kota Surabaya</div>
<div style="left:1123.00px;top:12px;font-size:19px;line-height:21px;color:#1242d2;white-space:nowrap;transform:scaleX(0.9376);transform-origin:0 0;">Data Penting</div>
</div>
<div class="row" style="top:180px">
<div style="left:8.00px;top:12px;font-size:19px;line-height:21px;color:#1242d2;white-space:nowrap;transform:scaleX(0.9500);transform-origin:0 0;">WAHYU FUJI ASTUTI</div>
<div style="left:266.00px;top:12px;font-size:19px;line-height:21px;color:#8a93ab;white-space:nowrap;transform:scaleX(0.9376);transform-origin:0 0;">Data Penting</div>
<div style="left:387.00px;top:12px;font-size:19px;line-height:21px;color:#1242d2;white-space:nowrap;transform:scaleX(0.9551);transform-origin:0 0;">Indonesia</div>
<div style="left:571.00px;top:12px;font-size:19px;line-height:21px;color:#1242d2;white-space:nowrap;transform:scaleX(0.9228);transform-origin:0 0;">Kota Surabaya</div>
<div style="left:1123.00px;top:12px;font-size:19px;line-height:21px;color:#1242d2;white-space:nowrap;transform:scaleX(0.9376);transform-origin:0 0;">Data Penting</div>
</div>
<div class="row alt" style="top:225px">
<div style="left:8.00px;top:12px;font-size:19px;line-height:21px;color:#1242d2;white-space:nowrap;transform:scaleX(0.9500);transform-origin:0 0;">...ewin Indrati</div>
<div style="left:266.00px;top:12px;font-size:19px;line-height:21px;color:#8a93ab;white-space:nowrap;transform:scaleX(0.9376);transform-origin:0 0;">Data Penting</div>
<div style="left:387.00px;top:12px;font-size:19px;line-height:21px;color:#1242d2;white-space:nowrap;transform:scaleX(0.9551);transform-origin:0 0;">Indonesia</div>
<div style="left:571.00px;top:12px;font-size:19px;line-height:21px;color:#1242d2;white-space:nowrap;transform:scaleX(0.9228);transform-origin:0 0;">Kota Surabaya</div>
<div style="left:1123.00px;top:12px;font-size:19px;line-height:21px;color:#1242d2;white-space:nowrap;transform:scaleX(0.9376);transform-origin:0 0;">Data Penting</div>
</div>
<div class="row" style="top:270px">
<div style="left:8.00px;top:12px;font-size:19px;line-height:21px;color:#1242d2;white-space:nowrap;transform:scaleX(0.9468);transform-origin:0 0;">300 Acres Restaurant and Bar</div>
<div style="left:266.00px;top:12px;font-size:19px;line-height:21px;color:#8a93ab;white-space:nowrap;transform:scaleX(0.9500);transform-origin:0 0;">Restaurant</div>
<div style="left:387.00px;top:12px;font-size:19px;line-height:21px;color:#1242d2;white-space:nowrap;transform:scaleX(0.9500);transform-origin:0 0;">Australia</div>
<div style="left:483.00px;top:12px;font-size:19px;line-height:21px;color:#1242d2;white-space:nowrap;transform:scaleX(0.9500);transform-origin:0 0;">Australia</div>
<div style="left:571.00px;top:12px;font-size:19px;line-height:21px;color:#1242d2;white-space:nowrap;transform:scaleX(0.9452);transform-origin:0 0;">Wembley Downs WA 6014</div>
<div style="left:800.00px;top:12px;font-size:19px;line-height:21px;color:#1242d2;white-space:nowrap;transform:scaleX(0.9375);transform-origin:0 0;">GoogleMaps</div>
<div style="left:946.00px;top:12px;font-size:19px;line-height:21px;color:#111;white-space:nowrap;transform:scaleX(0.9862);transform-origin:0 0;">australia restaurant</div>
<div style="left:1123.00px;top:12px;font-size:19px;line-height:21px;color:#1242d2;white-space:nowrap;transform:scaleX(0.9438);transform-origin:0 0;">Australia Resto</div>
</div>
<div class="row alt" style="top:315px">
<div style="left:8.00px;top:12px;font-size:19px;line-height:21px;color:#1242d2;white-space:nowrap;transform:scaleX(0.9500);transform-origin:0 0;">48 Toko</div>
<div style="left:266.00px;top:12px;font-size:19px;line-height:21px;color:#8a93ab;white-space:nowrap;transform:scaleX(0.9500);transform-origin:0 0;">Accesories</div>
<div style="left:387.00px;top:12px;font-size:19px;line-height:21px;color:#1242d2;white-space:nowrap;transform:scaleX(0.9551);transform-origin:0 0;">Indonesia</div>
<div style="left:800.00px;top:12px;font-size:19px;line-height:21px;color:#1242d2;white-space:nowrap;transform:scaleX(0.9695);transform-origin:0 0;">IdnBizdirlibCom</div>
<div style="left:1123.00px;top:12px;font-size:19px;line-height:21px;color:#1242d2;white-space:nowrap;transform:scaleX(0.9619);transform-origin:0 0;">tes bizdirlibcomTes Bizdirlib, Tes Bizdirlib</div>
</div>
<div class="row" style="top:360px">
<div style="left:8.00px;top:12px;font-size:19px;line-height:21px;color:#1242d2;white-space:nowrap;transform:scaleX(0.9500);transform-origin:0 0;">A&#x27;IMATUL ISTIQOMAH</div>
<div style="left:266.00px;top:12px;font-size:19px;line-height:21px;color:#8a93ab;white-space:nowrap;transform:scaleX(0.9376);transform-origin:0 0;">Data Penting</div>
<div style="left:387.00px;top:12px;font-size:19px;line-height:21px;color:#1242d2;white-space:nowrap;transform:scaleX(0.9551);transform-origin:0 0;">Indonesia</div>
<div style="left:571.00px;top:12px;font-size:19px;line-height:21px;color:#1242d2;white-space:nowrap;transform:scaleX(0.9228);transform-origin:0 0;">Kota Surabaya</div>
<div style="left:1123.00px;top:12px;font-size:19px;line-height:21px;color:#1242d2;white-space:nowrap;transform:scaleX(0.9376);transform-origin:0 0;">Data Penting</div>
</div>
<div class="row alt" style="top:405px">
<div style="left:8.00px;top:12px;font-size:19px;line-height:21px;color:#1242d2;white-space:nowrap;transform:scaleX(0.9500);transform-origin:0 0;">A&#x27;an Siwi Kurnia</div>
<div style="left:266.00px;top:12px;font-size:19px;line-height:21px;color:#8a93ab;white-space:nowrap;transform:scaleX(0.9376);transform-origin:0 0;">Data Penting</div>
<div style="left:387.00px;top:12px;font-size:19px;line-height:21px;color:#1242d2;white-space:nowrap;transform:scaleX(0.9551);transform-origin:0 0;">Indonesia</div>
<div style="left:571.00px;top:12px;font-size:19px;line-height:21px;color:#1242d2;white-space:nowrap;transform:scaleX(0.9228);transform-origin:0 0;">Kota Surabaya</div>
<div style="left:1123.00px;top:12px;font-size:19px;line-height:21px;color:#1242d2;white-space:nowrap;transform:scaleX(0.9376);transform-origin:0 0;">Data Penting</div>
</div>
<div class="row" style="top:450px">
<div style="left:8.00px;top:12px;font-size:19px;line-height:21px;color:#1242d2;white-space:nowrap;transform:scaleX(0.9500);transform-origin:0 0;">A. Budiarni Kusumastutik</div>
<div style="left:266.00px;top:12px;font-size:19px;line-height:21px;color:#8a93ab;white-space:nowrap;transform:scaleX(0.9376);transform-origin:0 0;">Data Penting</div>
<div style="left:387.00px;top:12px;font-size:19px;line-height:21px;color:#1242d2;white-space:nowrap;transform:scaleX(0.9551);transform-origin:0 0;">Indonesia</div>
<div style="left:571.00px;top:12px;font-size:19px;line-height:21px;color:#1242d2;white-space:nowrap;transform:scaleX(0.9228);transform-origin:0 0;">Kota Surabaya</div>
<div style="left:1123.00px;top:12px;font-size:19px;line-height:21px;color:#1242d2;white-space:nowrap;transform:scaleX(0.9376);transform-origin:0 0;">Data Penting</div>
</div>
<div class="row alt" style="top:495px">
<div style="left:8.00px;top:12px;font-size:19px;line-height:21px;color:#1242d2;white-space:nowrap;transform:scaleX(0.9500);transform-origin:0 0;">A. FIKRI AMIRUDDIN IHSANI</div>
<div style="left:266.00px;top:12px;font-size:19px;line-height:21px;color:#8a93ab;white-space:nowrap;transform:scaleX(0.9376);transform-origin:0 0;">Data Penting</div>
<div style="left:387.00px;top:12px;font-size:19px;line-height:21px;color:#1242d2;white-space:nowrap;transform:scaleX(0.9551);transform-origin:0 0;">Indonesia</div>
<div style="left:571.00px;top:12px;font-size:19px;line-height:21px;color:#1242d2;white-space:nowrap;transform:scaleX(0.9228);transform-origin:0 0;">Kota Surabaya</div>
<div style="left:1123.00px;top:12px;font-size:19px;line-height:21px;color:#1242d2;white-space:nowrap;transform:scaleX(0.9376);transform-origin:0 0;">Data Penting</div>
</div>
</div>
<div style="left:1866px;top:425px;width:14px;height:532px;background:#e2e6ee"></div>
<div style="left:1868px;top:439px;width:10px;height:282px;background:#c7ced9"></div>
<div style="left:465px;top:943px;width:1415px;height:14px;background:#e2e6ee"></div>
<div style="left:479px;top:945px;width:1054px;height:10px;background:#c7ced9"></div>
<svg style="left:1869.5px;top:431px;width:7px;height:4px" viewBox="0 0 7 4" width="7" height="4" ><path d="M0 4 L3.5 0.3 L7 4 Z" fill="#c0c6d0"/></svg>
<svg style="left:1869.5px;top:934px;width:7px;height:4px" viewBox="0 0 7 4" width="7" height="4" ><path d="M0 0 L3.5 3.7 L7 0 Z" fill="#c0c6d0"/></svg>
<svg style="left:468px;top:946px;width:5px;height:8px" viewBox="0 0 5 8" width="5" height="8" ><path d="M5 0 L0.5 4 L5 8 Z" fill="#c0c6d0"/></svg>
<svg style="left:1857px;top:946px;width:5px;height:8px" viewBox="0 0 5 8" width="5" height="8" ><path d="M0 0 L4.5 4 L0 8 Z" fill="#c0c6d0"/></svg>
<svg style="left:1783px;top:967px;width:18px;height:19px" viewBox="0 0 18 19" width="18" height="19" ><path d="M1 1.2 H17 L10.5 9.5 V18 L7.5 15.5 V9.5 Z" fill="none" stroke="#111" stroke-width="1.7" stroke-linejoin="round"/></svg>
<div style="left:1803.90px;top:967px;font-size:17.5px;line-height:20px;color:#111;white-space:nowrap;transform:scaleX(1.1279);transform-origin:0 0;-webkit-text-stroke:0.2px #111;">edit filter</div>
<svg style="left:472px;top:1007px;width:20px;height:20px" viewBox="0 0 20 20" width="20" height="20" ><g fill="none" stroke="#5b3ff0" stroke-width="1.6"><path d="M12.5 1.2 L2.2 10 L12.5 18.8"/><path d="M17.5 1.2 L7.2 10 L17.5 18.8"/></g></svg>
<svg style="left:509px;top:1007px;width:14px;height:20px" viewBox="0 0 14 20" width="14" height="20" ><path d="M12 1.2 L2 10 L12 18.8" fill="none" stroke="#5b3ff0" stroke-width="1.6"/></svg>
<div style="left:540.80px;top:1009px;font-size:17.5px;line-height:20px;color:#4a4a4a;white-space:nowrap;transform:scaleX(1.1323);transform-origin:0 0;">Halaman</div>
<div style="left:626px;top:998px;width:70px;height:42px;border:1px solid #dee2e6;border-radius:5px;background:#fff"></div>
<div style="left:656.50px;top:1009px;font-size:17.5px;line-height:20px;color:#4a4a4a;white-space:nowrap;">1</div>
<div style="left:701.20px;top:1009px;font-size:17.5px;line-height:20px;color:#4a4a4a;white-space:nowrap;transform:scaleX(1.0765);transform-origin:0 0;">/ 779</div>
<svg style="left:761px;top:1007px;width:14px;height:20px" viewBox="0 0 14 20" width="14" height="20" ><path d="M2 1.2 L12 10 L2 18.8" fill="none" stroke="#5b3ff0" stroke-width="1.6"/></svg>
<svg style="left:792px;top:1007px;width:20px;height:20px" viewBox="0 0 20 20" width="20" height="20" ><g fill="none" stroke="#5b3ff0" stroke-width="1.6"><path d="M2.5 1.2 L12.8 10 L2.5 18.8"/><path d="M7.5 1.2 L17.8 10 L7.5 18.8"/></g></svg>
<svg style="left:843px;top:1006px;width:22px;height:22px" viewBox="0 0 22 22" width="22" height="22" ><g fill="none" stroke="#27895e" stroke-width="1.6" stroke-linecap="round"><path d="M3 9 Q5 2.5 11.5 2.5 Q16.5 2.5 19 6.5"/><path d="M19.5 1.5 V7 H14"/><path d="M19 13 Q17 19.5 10.5 19.5 Q5.5 19.5 3 15.5"/><path d="M2.5 20.5 V15 H8"/></g></svg>
<div style="left:1624.50px;top:1009px;font-size:17.5px;line-height:20px;color:#4a4a4a;white-space:nowrap;transform:scaleX(1.0391);transform-origin:0 0;">1 - 20 dari 15575</div>
<div style="left:1775px;top:998px;width:105px;height:42px;border:1px solid #dee2e6;border-radius:5px;background:#fff"></div>
<div style="left:1793.90px;top:1009px;font-size:17.5px;line-height:20px;color:#4a4a4a;white-space:nowrap;transform:scaleX(1.0583);transform-origin:0 0;">20</div>
<svg style="left:1862px;top:1015px;width:13px;height:10px" viewBox="0 0 13 10" width="13" height="10" ><path d="M1.8 1.5 L6.5 6.8 L11.2 1.5" fill="none" stroke="#444" stroke-width="1.9"/></svg>
</body></html>
